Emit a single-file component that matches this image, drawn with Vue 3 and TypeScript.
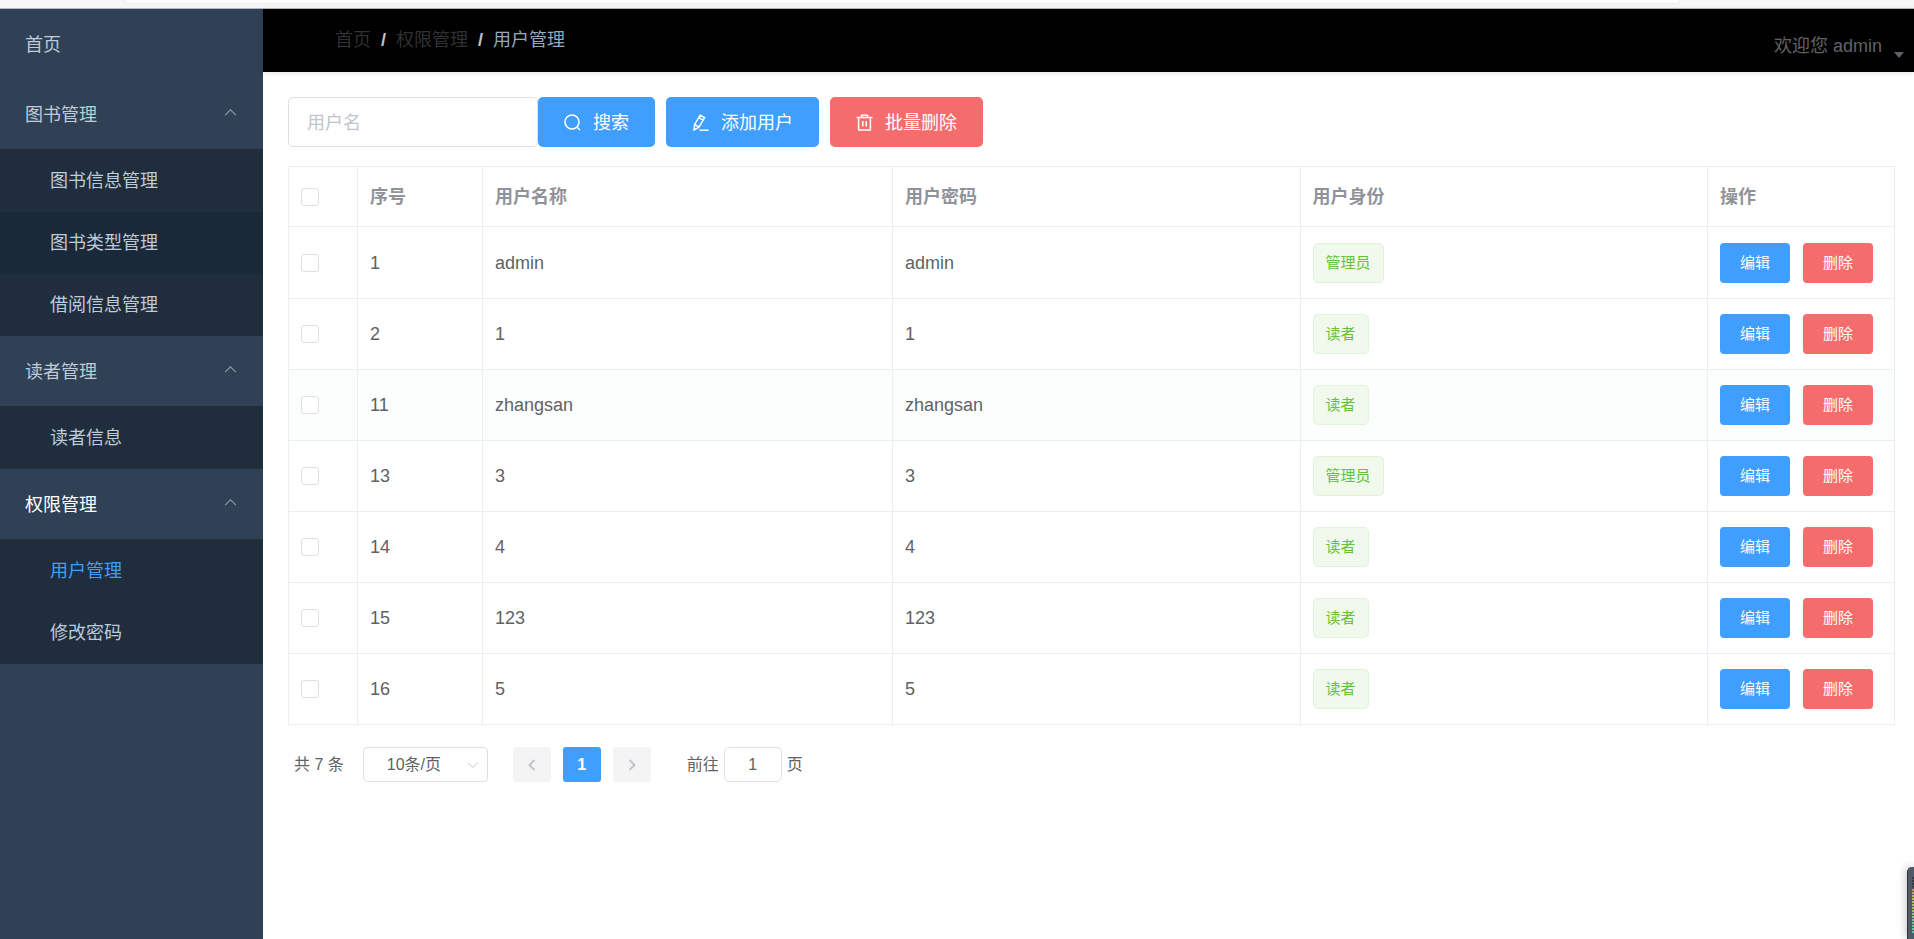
<script setup lang="ts">
import { ref } from 'vue'

interface MenuGroup {
  title: string
  active?: boolean
  items: { label: string; state?: string }[]
}

interface User {
  id: number
  name: string
  password: string
  role: string
}

const groups: MenuGroup[] = [
  {
    title: '图书管理',
    items: [{ label: '图书信息管理' }, { label: '图书类型管理', state: 'hovered' }, { label: '借阅信息管理' }],
  },
  { title: '读者管理', items: [{ label: '读者信息' }] },
  { title: '权限管理', active: true, items: [{ label: '用户管理', state: 'current' }, { label: '修改密码' }] },
]

const users: User[] = [
  { id: 1, name: 'admin', password: 'admin', role: '管理员' },
  { id: 2, name: '1', password: '1', role: '读者' },
  { id: 11, name: 'zhangsan', password: 'zhangsan', role: '读者' },
  { id: 13, name: '3', password: '3', role: '管理员' },
  { id: 14, name: '4', password: '4', role: '读者' },
  { id: 15, name: '123', password: '123', role: '读者' },
  { id: 16, name: '5', password: '5', role: '读者' },
]

const keyword = ref('')
const page = ref('1')
const selected = ref<number[]>([])

function toggleAll(event: Event) {
  selected.value = (event.target as HTMLInputElement).checked ? users.map((u) => u.id) : []
}
</script>

<template>
  <div class="screen">
    <div class="browser-edge"><div class="address"></div></div>
    <div class="layout">
      <nav class="sidebar">
        <a class="menu-title" href="#">首页</a>
        <section v-for="group in groups" :key="group.title">
          <button type="button" class="menu-title" :class="{ active: group.active }">
            <span>{{ group.title }}</span>
            <svg class="chevron" viewBox="0 0 12 12"><path d="M1 8.5 6 3.5 11 8.5" /></svg>
          </button>
          <div class="submenu">
            <a v-for="item in group.items" :key="item.label" href="#" :class="item.state">{{ item.label }}</a>
          </div>
        </section>
      </nav>

      <div class="body">
        <header class="topbar">
          <div class="breadcrumb">
            <a href="#">首页</a><b>/</b><a href="#">权限管理</a><b>/</b><span>用户管理</span>
          </div>
          <button type="button" class="account">
            <span>欢迎您 admin</span>
            <svg viewBox="0 0 10 6"><path d="M0 0H10L5 6Z" /></svg>
          </button>
        </header>

        <main>
          <div class="toolbar">
            <input v-model="keyword" type="text" placeholder="用户名" aria-label="用户名" />
            <button type="button" class="btn primary">
              <svg class="icon" viewBox="0 0 17 17"><circle cx="8" cy="8" r="7" /><path d="M13 13.2 16 16" /></svg>
              <span>搜索</span>
            </button>
            <button type="button" class="btn primary">
              <svg class="icon" viewBox="0 0 17 17">
                <path d="M2.6 10.4 8.2 1.2 12.6 3.6 7 13.2 2 16ZM6.9 3.6 11.2 6.2M2.6 10.4 7 13.2M7.5 16.3H16.5" />
              </svg>
              <span>添加用户</span>
            </button>
            <button type="button" class="btn danger">
              <svg class="icon" viewBox="0 0 17 17">
                <path d="M.5 3.6H16.5M5.5 3.6V1.2H11.5V3.6M2.6 3.6V16H14.4V3.6M6.8 7V12.5M10.2 7V12.5" />
              </svg>
              <span>批量删除</span>
            </button>
          </div>

          <table>
            <colgroup>
              <col class="col-check" />
              <col class="col-id" />
              <col class="col-name" />
              <col />
              <col />
              <col class="col-action" />
            </colgroup>
            <thead>
              <tr>
                <th><input type="checkbox" aria-label="全选" @change="toggleAll" /></th>
                <th>序号</th>
                <th>用户名称</th>
                <th>用户密码</th>
                <th>用户身份</th>
                <th>操作</th>
              </tr>
            </thead>
            <tbody>
              <tr v-for="user in users" :key="user.id" :class="{ tinted: user.id === 11 }">
                <td><input v-model="selected" type="checkbox" :value="user.id" :aria-label="user.name" /></td>
                <td>{{ user.id }}</td>
                <td>{{ user.name }}</td>
                <td>{{ user.password }}</td>
                <td><span class="tag">{{ user.role }}</span></td>
                <td>
                  <div class="actions">
                    <button type="button" class="btn small primary">编辑</button>
                    <button type="button" class="btn small danger">删除</button>
                  </div>
                </td>
              </tr>
            </tbody>
          </table>

          <div class="pagination">
            <span>共 7 条</span>
            <div class="page-size">
              <select aria-label="每页条数">
                <option>10条/页</option>
              </select>
              <svg viewBox="0 0 12 12"><path d="M1 3.5 6 8.5 11 3.5" /></svg>
            </div>
            <div class="pager">
              <button type="button" disabled aria-label="上一页">
                <svg viewBox="0 0 12 12"><path d="M8.5 1 3.5 6 8.5 11" /></svg>
              </button>
              <button type="button" class="current">1</button>
              <button type="button" disabled aria-label="下一页">
                <svg viewBox="0 0 12 12"><path d="M3.5 1 8.5 6 3.5 11" /></svg>
              </button>
            </div>
            <label class="jump">前往<input v-model="page" type="text" />页</label>
          </div>
        </main>
      </div>
    </div>
    <div class="dock"><div class="meter"></div></div>
  </div>
</template>

<style>
body {
  margin: 0;
}
</style>

<style scoped>
.screen {
  position: relative;
  display: flex;
  flex-direction: column;
  min-height: 100vh;
  overflow: hidden;
  background: #fff;
  color: #606266;
  font: 18px/24px "Liberation Sans", "Noto Sans CJK SC", sans-serif;
}
.screen *,
.screen {
  box-sizing: border-box;
}
button,
input,
select {
  margin: 0;
  font: inherit;
  color: inherit;
}
button {
  padding: 0;
  border: 0;
  background: none;
  cursor: pointer;
}
a {
  color: inherit;
  text-decoration: none;
}
svg {
  flex: none;
  fill: none;
  stroke: currentColor;
}
.browser-edge {
  height: 9px;
  padding: 0 235px 0 126px;
  border-bottom: 1px solid #b8b8b8;
  background: #f6f6f6;
}
.address {
  height: 3px;
  border-radius: 0 0 5px 5px;
  background: #fff;
  box-shadow: 0 0 2px #ddd;
}
.layout {
  display: flex;
  flex: 1;
}
.sidebar {
  flex: none;
  width: 263px;
  background: #304156;
  color: #bfcbd9;
}
.menu-title {
  display: flex;
  align-items: center;
  justify-content: space-between;
  width: 100%;
  height: 70px;
  padding: 2px 26px 0 25px;
}
.menu-title.active {
  color: #fff;
}
.chevron {
  width: 13px;
  height: 13px;
  margin-bottom: 5px;
  color: #8c98a6;
}
.submenu {
  padding-top: 1px;
  background: #1f2d3d;
}
.submenu a {
  display: block;
  padding-left: 50px;
  line-height: 62px;
}
.submenu .hovered {
  background: #1a2939;
}
.submenu .current {
  color: #409eff;
}
.body {
  flex: 1;
  min-width: 0;
}
.topbar {
  display: flex;
  justify-content: space-between;
  height: 63px;
  padding: 0 10px 0 72px;
  background: #000;
  box-shadow: 0 1px 5px rgba(0, 21, 41, 0.12);
}
.breadcrumb {
  display: flex;
  align-items: center;
  height: 62px;
  color: #97a8be;
}
.breadcrumb a {
  color: #303133;
}
.breadcrumb b {
  margin: 0 10px;
  color: #c0c4cc;
}
.account {
  display: flex;
  align-items: center;
  gap: 12px;
  height: 74px;
}
.account svg {
  width: 10px;
  height: 6px;
  margin-top: 18px;
  fill: currentColor;
  stroke: none;
}
main {
  padding: 25px 19px 25px 25px;
}
.toolbar {
  display: flex;
  gap: 11px;
}
.toolbar input {
  width: 250px;
  height: 50px;
  margin-right: -11px;
  padding: 2px 18px 0;
  border: 1px solid #dcdfe6;
  border-radius: 5px;
}
input {
  outline: 0;
}
.toolbar input::placeholder {
  color: #c0c4cc;
}
.btn {
  display: flex;
  align-items: center;
  justify-content: center;
  gap: 12px;
  height: 50px;
  padding: 2px 26px 0;
  border-radius: 5px;
  color: #fff;
}
.btn .icon {
  width: 17px;
  height: 17px;
  margin-bottom: 2px;
  stroke-width: 1.5;
}
.primary {
  background: #409eff;
}
.danger {
  background: #f56c6c;
}
table {
  width: 100%;
  margin-top: 19px;
  table-layout: fixed;
  border-collapse: collapse;
}
.col-check {
  width: 69px;
}
.col-id {
  width: 125px;
}
.col-name {
  width: 410px;
}
.col-action {
  width: 187px;
}
th,
td {
  height: 71px;
  padding: 0 12px;
  border: 1px solid #ebeef5;
  text-align: left;
}
th {
  height: 60px;
  color: #909399;
}
tbody tr:first-child td {
  height: 72px;
}
.tinted {
  background: #fbfefd;
}
input[type='checkbox'] {
  display: block;
  width: 18px;
  height: 18px;
  border: 1px solid #dcdfe6;
  border-radius: 3px;
  background: #fff;
  appearance: none;
}
input[type='checkbox']:checked {
  background: #409eff;
}
.tag {
  display: inline-block;
  height: 40px;
  padding: 0 12px;
  border: 1px solid #e1f3d8;
  border-radius: 5px;
  background: #f0f9eb;
  color: #67c23a;
  font-size: 15px;
  line-height: 38px;
  vertical-align: middle;
}
.actions {
  display: flex;
  gap: 13px;
}
.small {
  width: 70px;
  height: 40px;
  padding: 0;
  border-radius: 4px;
  font-size: 15px;
}
.pagination {
  display: flex;
  align-items: center;
  margin-top: 22px;
  padding-left: 6px;
  font-size: 16px;
}
.page-size {
  position: relative;
  width: 125px;
  margin: 0 25px 0 19px;
}
.page-size select {
  width: 100%;
  height: 35px;
  padding: 0 23px;
  border: 1px solid #dcdfe6;
  border-radius: 4px;
  background: #fff;
  appearance: none;
}
.page-size svg {
  position: absolute;
  top: 12px;
  right: 9px;
  width: 12px;
  height: 12px;
  color: #c0c4cc;
}
.pager {
  display: flex;
  gap: 12px;
}
.pager button {
  display: flex;
  align-items: center;
  justify-content: center;
  width: 38px;
  height: 35px;
  border-radius: 3px;
  background: #f4f4f5;
  color: #c0c4cc;
}
.pager svg {
  width: 12px;
  height: 12px;
  stroke-width: 2;
}
.pager .current {
  background: #409eff;
  color: #fff;
  font-weight: 700;
}
.jump {
  display: flex;
  align-items: center;
  gap: 5px;
  margin-left: 36px;
}
.jump input {
  width: 58px;
  height: 35px;
  padding: 0;
  border: 1px solid #dcdfe6;
  border-radius: 5px;
  text-align: center;
}
.dock {
  position: absolute;
  right: 0;
  bottom: 0;
  width: 7px;
  height: 72px;
  padding: 9px 0 6px 4px;
  border-left: 1px solid #30343c;
  border-radius: 5px 0 0 0;
  background: #525a69;
  box-shadow: 0 0 10px rgba(0, 0, 0, 0.3);
}
.meter {
  height: 100%;
  background:
    repeating-linear-gradient(#525a69 0 1px, transparent 1px 3px),
    linear-gradient(#333943 20%, #c9825c 21%, #c9b85c 35%, #8fc07c 70%, #52c9b0);
}
</style>
